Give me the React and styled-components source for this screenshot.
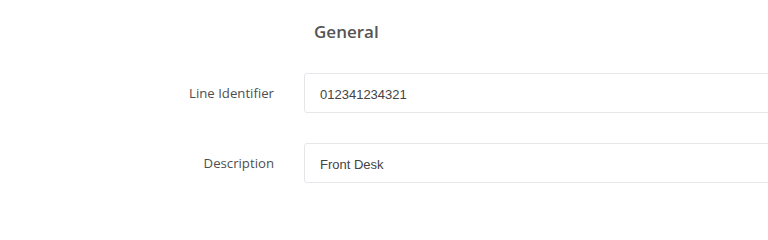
import styled, {createGlobalStyle} from "styled-components";

const GlobalStyle = createGlobalStyle`
    body {
        margin: 0;
        background: #ffffff;
    }
`

const Section = styled.section`
    padding-top: 20px;
    overflow: hidden;
`
const SectionTitle = styled.h3`
    margin: 0 0 29px 314px;
    font-family: "Open Sans", sans-serif;
    font-size: 17px;
    font-weight: 600;
    line-height: 24px;
    color: #555555;
`
const FieldRow = styled.div`
    display: grid;
    grid-template-columns: 274px 1fr;
    column-gap: 30px;
    align-items: start;
    margin-bottom: 30px;
`
const FieldLabel = styled.label`
    font-family: "Open Sans", sans-serif;
    font-size: 13.2px;
    line-height: 20px;
    padding-top: 10px;
    text-align: right;
    color: #4f4f4f;
`
const FieldInput = styled.input`
    box-sizing: border-box;
    height: 40px;
    width: calc(100% + 20px);
    padding: 3px 15px 0;
    border: 1px solid #e6e6ea;
    border-radius: 3px;
    font-family: "Liberation Sans", Arial, sans-serif;
    font-size: 13px;
    color: #444444;
    background: #ffffff;
    outline: none;
`

const fields = [
    {id: "lineIdentifier", label: "Line Identifier", value: "012341234321"},
    {id: "description", label: "Description", value: "Front Desk"},
]

export default function App(){
    return (
        <>
            <GlobalStyle/>
            <Section>
                <SectionTitle>General</SectionTitle>
                {fields.map(field => (
                    <FieldRow key={field.id}>
                        <FieldLabel htmlFor={field.id}>{field.label}</FieldLabel>
                        <FieldInput id={field.id} defaultValue={field.value} readOnly/>
                    </FieldRow>
                ))}
            </Section>
        </>)
}
